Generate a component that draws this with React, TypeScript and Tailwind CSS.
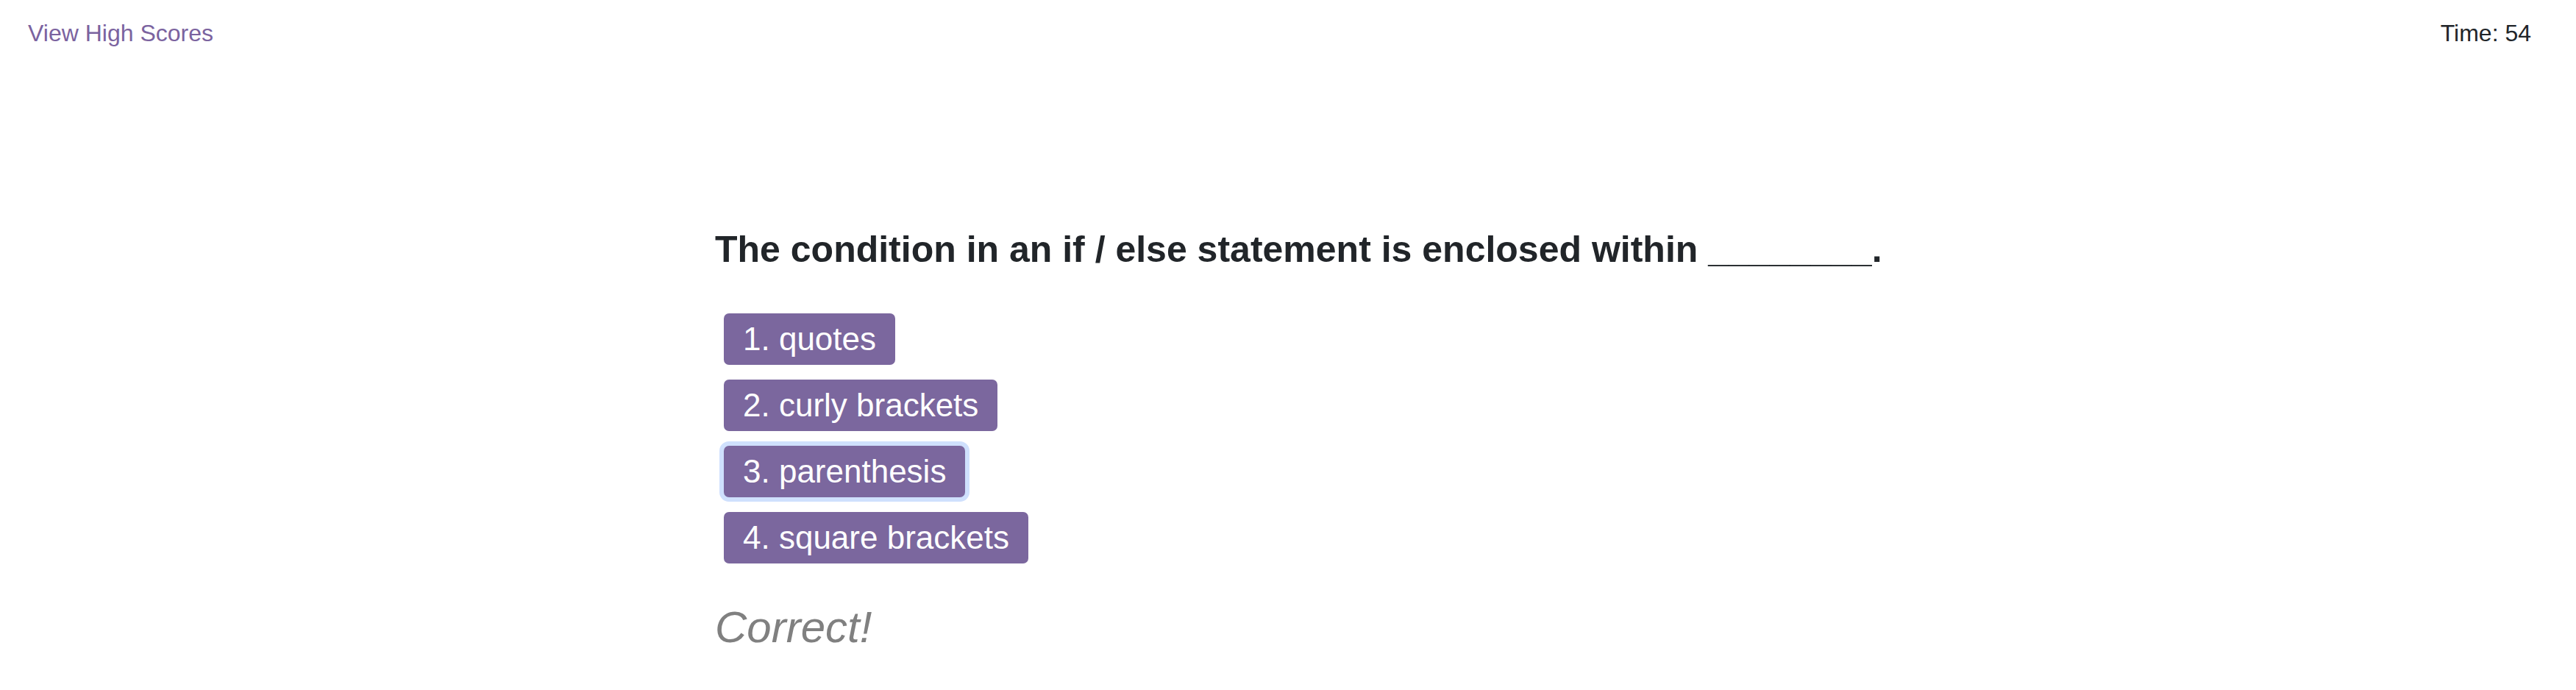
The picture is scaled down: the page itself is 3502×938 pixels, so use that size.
import React from "react";

const answers = ["1. quotes", "2. curly brackets", "3. parenthesis", "4. square brackets"];

export default function App() {
  return (
    <div className="min-h-screen bg-white font-['Liberation_Sans',Arial,sans-serif]">
      <header className="flex justify-between pl-[38px] pr-[61px] pt-[25px] text-[32px] leading-[40px]">
        <a href="#" className="text-[#7b639f] no-underline">View High Scores</a>
        <span className="text-[#212529]">Time: 54</span>
      </header>
      <main className="w-[1558px] mx-auto mt-[244px]">
        <h2 className="text-[50px] leading-[60px] font-bold text-[#212529] whitespace-nowrap">
          The condition in an if / else statement is enclosed within ________.
        </h2>
        <div className="flex flex-col items-start gap-[20px] mt-[57px] ml-[12px]">
          {answers.map((a, i) => (
            <button
              key={a}
              className={
                i === 2
                  ? "bg-[#7b679e] text-white text-[44px] leading-[66px] py-[2px] px-[26px] rounded-[7px] shadow-[0_0_0_6px_#cfe0fd]"
                  : "bg-[#7b679e] text-white text-[44px] leading-[66px] py-[2px] px-[26px] rounded-[7px]"
              }
            >
              {a}
            </button>
          ))}
        </div>
        <p className="mt-[52px] italic text-[60px] leading-[70px] text-[#808080]">Correct!</p>
      </main>
    </div>
  );
}
